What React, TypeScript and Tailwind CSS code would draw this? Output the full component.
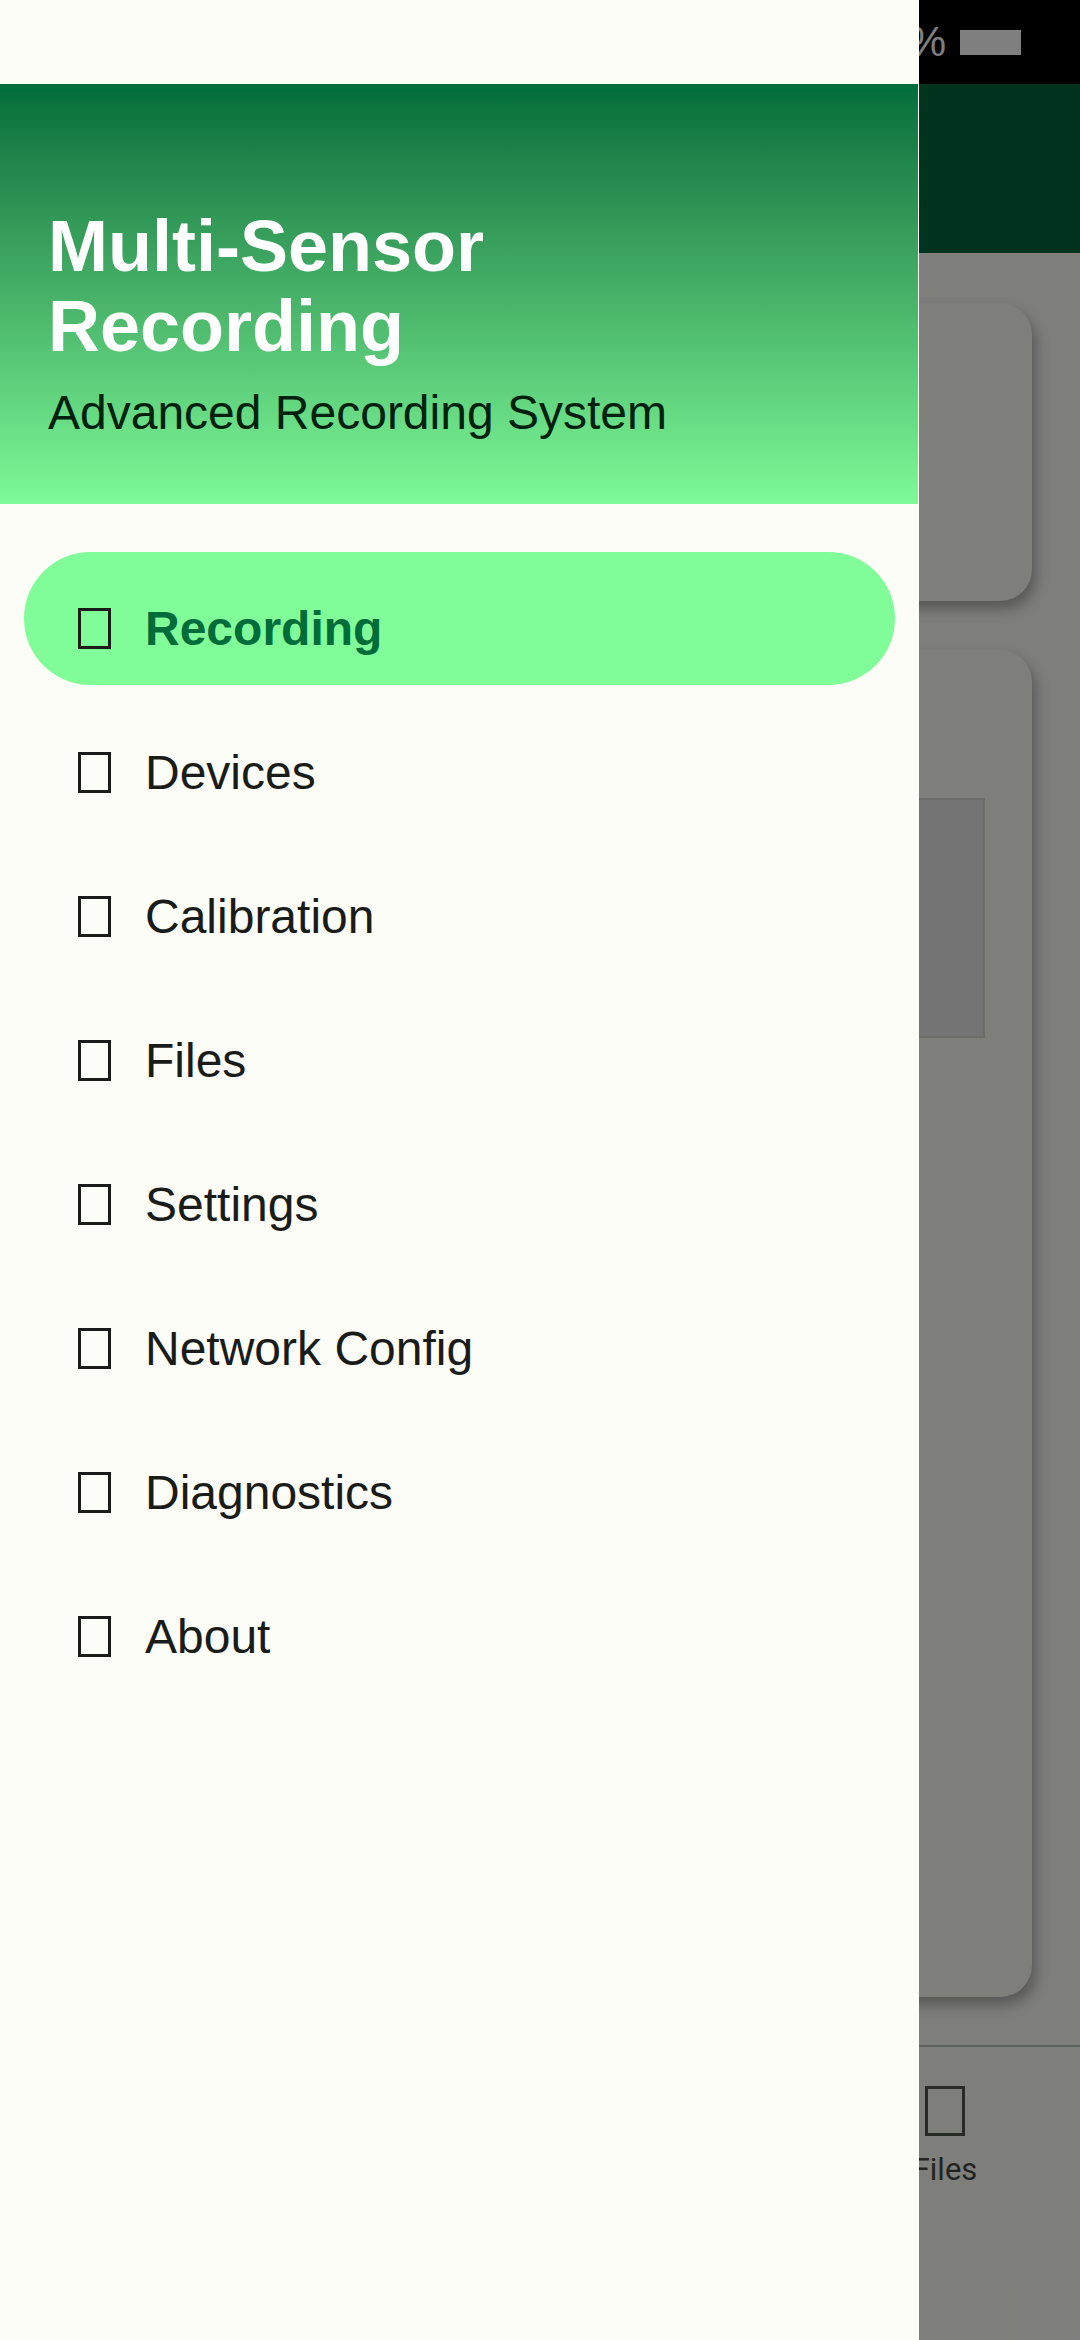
import React from 'react'

const menuItems = [
  'Recording',
  'Devices',
  'Calibration',
  'Files',
  'Settings',
  'Network Config',
  'Diagnostics',
  'About',
]

const navItems = ['Recording', 'Devices', 'Calibration', 'Files']

// Missing-glyph box that the app renders instead of its icons
function TofuIcon({ className }: { className: string }) {
  return <span className={`block shrink-0 ${className}`} />
}

function AppBehind() {
  return (
    <div className="flex h-[2340px] w-[1080px] flex-col bg-[#fcfdf7]">
      {/* status bar */}
      <div className="flex h-[84px] items-center justify-end bg-black pr-[59px]">
        <span className="text-[42px] leading-none text-white">100%</span>
        <span className="ml-[14px] h-[25px] w-[61px] bg-white" />
      </div>

      {/* top app bar */}
      <div className="h-[169px] bg-[#00663a]" />

      {/* content */}
      <div className="flex flex-1 flex-col gap-[49px] px-12 pt-[50px]">
        <div className="h-[298px] rounded-[32px] bg-[#fcfdf7] shadow-[4px_8px_14px_rgba(0,0,0,0.3)]" />
        <div className="h-[1347px] rounded-[32px] bg-[#fcfdf7] px-[47px] pt-[148px] shadow-[4px_8px_14px_rgba(0,0,0,0.3)]">
          <div className="h-[240px] border-2 border-[#d4dccf] bg-[#e9e9e9]" />
        </div>
      </div>

      {/* bottom navigation */}
      <div className="grid h-[295px] grid-cols-4 border-t-2 border-[#bec8bc]">
        {navItems.map((item) => (
          <div key={item} className="flex flex-col items-center pt-[39px]">
            <TofuIcon className="h-[50px] w-[40px] border-[3px] border-[#505450]" />
            <span className="mt-[14px] font-['Roboto',sans-serif] text-[31px] leading-[40px] text-[#444844]">
              {item}
            </span>
          </div>
        ))}
      </div>
    </div>
  )
}

export default function App() {
  return (
    <div className="relative h-[2340px] w-[1080px] overflow-hidden font-['Liberation_Sans',Arial,sans-serif]">
      <AppBehind />

      {/* scrim */}
      <div className="absolute inset-0 bg-black/50" />

      {/* navigation drawer */}
      <div className="absolute left-0 top-0 flex h-full w-[919px] flex-col bg-[#fcfdf7]">
        <div className="h-[84px]" />

        <div className="flex h-[420px] w-[918px] flex-col justify-end bg-gradient-to-b from-[#006d3b] to-[#7ffa98] pb-[64px] pl-12 pr-[96px]">
          <h1 className="text-[72px] font-bold leading-[80px] text-white">Multi-Sensor Recording</h1>
          <p className="mt-[19px] text-[48px] leading-[55px] text-[#00210e]">Advanced Recording System</p>
        </div>

        <nav className="flex flex-col gap-[11px] px-6 pt-12">
          {menuItems.map((item, i) => {
            const active = i === 0
            return (
              <div
                key={item}
                className={`flex h-[133px] items-center rounded-full pl-[54px] pt-[20px] ${
                  active ? 'bg-[#80fc98]' : ''
                }`}
              >
                <TofuIcon className="h-[41px] w-[33px] border-[3px] border-[#1a1c19]" />
                <span
                  className={`ml-[34px] text-[48px] leading-[55px] ${
                    active ? 'font-bold text-[#006c3a]' : 'text-[#1a1c19]'
                  }`}
                >
                  {item}
                </span>
              </div>
            )
          })}
        </nav>
      </div>
    </div>
  )
}
